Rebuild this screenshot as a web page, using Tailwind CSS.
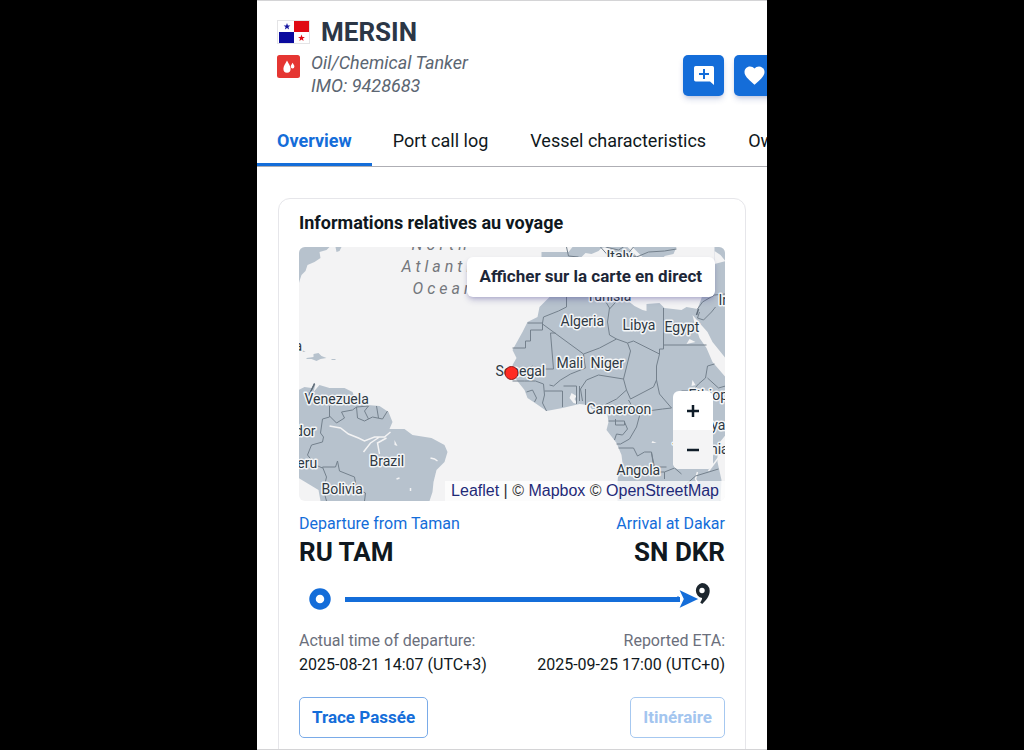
<!DOCTYPE html>
<html lang="fr">
<head>
<meta charset="utf-8">
<meta name="viewport" content="width=device-width, initial-scale=1">
<title>MERSIN</title>
<script src="https://cdn.jsdelivr.net/npm/@tailwindcss/browser@4"></script>
</head>
<body class="bg-black font-['Roboto',sans-serif] text-[#0f1820]">
<main class="mx-auto h-screen w-full max-w-[510px] overflow-hidden border-y border-[#d4d4d6] bg-white">
  <header class="-mr-2 flex items-start justify-between pt-[15px] pl-5">
    <div>
      <div class="flex items-center gap-[11px]">
        <svg class="h-6 w-[33px]" viewBox="0 0 33 24" role="img" aria-label="Panama">
          <rect x=".5" y=".5" width="32" height="23" fill="#fff" stroke="#e4e4e6"/>
          <rect x="17" y="1" width="15" height="11" fill="#e00a13"/>
          <rect x="2" y="12" width="15" height="11" fill="#0a0a9e"/>
          <path d="M10 3l.9 2.400h2.500l-2 1.600.7 2.400-2.100-1.400-2.100 1.400.7-2.400-2-1.600h2.500z" fill="#14149f"/>
          <path d="M24.500 14.500l.9 2.400h2.500l-2 1.600.7 2.400-2.100-1.400-2.100 1.400.7-2.400-2-1.600h2.500z" fill="#e00a13"/>
        </svg>
        <h1 class="text-[26px] leading-8 font-bold text-[#2b3646]">MERSIN</h1>
      </div>
      <div class="mt-[3px] flex items-start gap-[11px]">
        <svg class="mt-1 h-[23px] w-[23px]" viewBox="0 0 23 23" aria-hidden="true">
          <rect width="23" height="23" rx="2.500" fill="#e53632"/>
          <path d="M10 5.500c1.500 3.500 3.600 5.300 3.600 8.300a3.600 4 0 0 1-7.200 0c0-3 2.100-4.800 3.600-8.300zM15.600 7.800c.7 1.500 1.800 2.300 1.800 3.800a1.800 1.900 0 0 1-3.600 0c0-1.500 1.100-2.300 1.800-3.800z" fill="#fff"/>
        </svg>
        <p class="text-[18px] leading-[23px] text-[#5c6672] italic">Oil/Chemical Tanker<br>IMO: 9428683</p>
      </div>
    </div>
    <div class="mt-[39px] flex shrink-0 gap-[10px]">
      <button type="button" aria-label="Add note" class="flex h-[41px] w-[41px] items-center justify-center rounded-[5px] bg-[#146dd9] shadow-md shadow-blue-900/20">
        <svg class="h-6 w-6" viewBox="0 0 24 24" aria-hidden="true"><path d="M3.700 2h16.600A1.700 1.700 0 0 1 22 3.700V21l-4-3.500H3.700A1.700 1.700 0 0 1 2 15.800V3.700A1.700 1.700 0 0 1 3.700 2z" fill="#fff"/><path d="M12 5v10M7 10h10" stroke="#146dd9" stroke-width="2"/></svg>
      </button>
      <button type="button" aria-label="Favourite" class="flex h-[41px] w-[41px] items-center justify-center rounded-[5px] bg-[#146dd9] shadow-md shadow-blue-900/20">
        <svg class="h-6 w-6" viewBox="0 0 24 24" aria-hidden="true"><path d="M11.500 20.850l-1.450-1.320C4.900 14.860 1.500 11.780 1.500 8 1.500 4.920 3.920 2.500 7 2.500c1.740 0 3.410.81 4.500 2.090C12.590 3.310 14.260 2.500 16 2.500 19.080 2.500 21.500 4.920 21.500 8c0 3.780-3.400 6.860-8.550 11.540z" fill="#fff"/></svg>
      </button>
    </div>
  </header>

  <nav class="mt-[17px] flex overflow-hidden border-b border-[#aeaeb4] text-[18px] leading-6 whitespace-nowrap">
    <a href="#overview" aria-current="page" class="shrink-0 border-b-3 border-[#146dd9] px-5 pt-[15px] pb-[10px] font-bold text-[#146dd9]">Overview</a>
    <a href="#ports" class="shrink-0 px-[21px] pt-[15px]">Port call log</a>
    <a href="#vessel" class="shrink-0 px-[21px] pt-[15px]">Vessel characteristics</a>
    <a href="#ownership" class="shrink-0 px-[21px] pt-[15px]">Ownership</a>
  </nav>

  <section id="overview" class="mx-[21px] mt-[31px] rounded-xl border border-[#e6e6ea] px-5 pt-3 pb-10">
    <h2 class="text-[18px] leading-6 font-bold">Informations relatives au voyage</h2>

    <div class="relative mt-3 overflow-hidden rounded-md bg-[#f3f3f4]">
      <svg class="block h-[254px] w-full" viewBox="0 0 427 254" preserveAspectRatio="xMidYMid slice" role="img" aria-label="Carte du voyage">
        <g fill="#b7c2cd">
          <path d="M0 0H31L28 3 21 5 22 11 16 15 9 18 7 24 3 28 1 34 0 38zM37 0H43L41 4 38 5z"/>
          <path d="M0 143L6 140 13 141 17 137 15 145 21 138 31 141 46 141 54 145 56 150 68 153 69 158 81 159 90 165 94 175 91 182 106 182 114 188 133 191 146 198 149 205 146 215 138 223 135 235 134 245 131 254H22L20 243 0 231z"/>
          <path d="M0 103H4L7 105 0 105zM8 111L15 110 15 107 20 106 23 109 28 111 22 112 18 114 13 112 8 112zM33 112H37V113H33z"/>
          <path d="M243 5H270L274 0H378L375 7 366 9 361 20H427V111L414 95 409 85 401 76 394 68 396 76 401 91 408 101 414 115 427 130V188L419 198V215L423 233 422 254H319V235L320 225 324 216 323 208 318 196 308 183 310 175 309 168 298 166 289 158 281 157 264 161 248 164 238 157 229 151 226 143 218 133 214 118 218 111 214 103 224 85 229 75 239 70 241 60 251 50 243 30z"/>
          <path d="M416 0H427V30H416z"/>
        </g>
        <g fill="#f3f3f4">
          <path d="M283 10L287 6 293 7 300 4 303 1 308 0 318 10zM331 48V55L336 59 344 63 348 64 348 57 361 56 366 61 383 63 388 60 399 62 402 54 404 48zM334 0L344 10H339L329 0zM416 4L422 8 427 14 416 17z"/>
          <path d="M273 146L278 149 276 152 279 157 275 156 271 151zM394 133L397 138 393 139zM354 194L358 196 353 196zM391 92L397 95 388 97zM96 193L99 199 96 198z"/>
        </g>
        <g fill="none" stroke="#f3f3f4" stroke-width="1.500">
          <path d="M31 179L42 181 50 187 60 191 66 194 76 190 86 190 92 185M65 205L72 196 81 190M81 207L79 196 88 191M132 211L136 212 139 214M98 232L101 231M112 241V244M399 225L397 232 401 239M422 208L410 224"/>
        </g>
        <g fill="none" stroke="#74808c" stroke-width="1">
          <path d="M16 136L11 147 8 156M31 159V170L24 172 22 186 25 190 24 195 13 198 9 208 17 218 24 221M31 169L38 176 46 171 43 165 54 163 58 160 59 171 66 174 74 170 84 172 89 164M58 160L70 159 66 164 70 172M78 159L80 171M24 220L37 220 39 214 41 224 56 230 58 242 67 246 66 254M24 220L28 230 25 243 28 254"/>
          <path d="M214 101H227V94H232V83H244V76H229M244 76L245 70 260 64 268 60V50M244 77L285 107 301 101 318 92 311 88 309 75 311 61 308 56M257 86L252 86 255 122H236L234 119 226 123M285 107L286 115 287 121 272 127 262 133 255 139 251 138M311 62L321 51M318 92L329 96 335 94 361 107V102M365 61V98H408M361 102H365V98M329 96L332 104 328 120 325 132 328 143 318 152 306 158M361 107L358 119V133L355 140 332 152 328 143M358 133L361 147 373 161M330 153L334 160 342 165 364 162 373 161M214 134H226L237 134 245 137 246 148 244 156 248 164M228 145L234 143 238 151 236 155M246 144H264V160M265 139H278V157M281 139V154M284 154L282 142 288 133 300 128 325 132M287 158V142M310 174H326V178H317V172M326 175L329 182 324 188 318 187 316 193M342 165L338 180 331 192 322 197 318 197M320 201H335L339 209 346 205H353L355 219 356 225 366 225 376 221 383 227M383 144H394L400 137 407 131 409 119 416 117M409 131L420 141 427 139M353 206L356 220H368M366 225V232M388 237L397 229 420 222"/>
          <path d="M268 0L270 9 280 10M302 0L310 9M307 0L320 3 325 0M335 0L329 7 338 10 350 5 366 4 378 2M399 62L404 55 416 48 427 47M401 65L399 71 405 73 413 65 417 60"/>
        </g>
        <g fill="none" stroke="#5f6b78" stroke-width="1.500"><path d="M16 137L12 145 10 149M275 188M400 62L398 68"/></g>

        <g class="text-[16px] tracking-[4px] italic" fill="#74777c">
          <text x="113" y="3">North</text>
          <text x="103" y="25">Atlantic</text>
          <text x="114" y="47">Ocean</text>
        </g>
        <g class="text-[14px]" fill="#2f3943" stroke="#f3f5f7" stroke-width="3" stroke-linejoin="round" paint-order="stroke">
          <text x="-4" y="104">a</text>
          <text x="6" y="157">Venezuela</text>
          <text x="-34" y="189">Ecuador</text>
          <text x="-10" y="221">Peru</text>
          <text x="71" y="219">Brazil</text>
          <text x="23" y="247">Bolivia</text>
          <text x="308" y="14">Italy</text>
          <text x="288" y="54">Tunisia</text>
          <text x="262" y="79">Algeria</text>
          <text x="324" y="83">Libya</text>
          <text x="366" y="85">Egypt</text>
          <text x="420" y="58">Iraq</text>
          <text x="258" y="121">Mali</text>
          <text x="292" y="121">Niger</text>
          <text x="197" y="129">Senegal</text>
          <text x="288" y="167">Cameroon</text>
          <text x="318" y="228">Angola</text>
          <text x="390" y="153">Ethiopia</text>
          <text x="389" y="183">Kenya</text>
          <text x="374" y="207">Tanzania</text>
        </g>
        <circle cx="213" cy="126" r="6.500" fill="#ff2b22" stroke="#8c1b1b"/>
      </svg>
      <button type="button" class="absolute top-[10px] right-[10px] h-10 rounded-md bg-white px-[13px] text-[17px] font-bold whitespace-nowrap text-[#1d2738] shadow-md shadow-indigo-900/25">Afficher sur la carte en direct</button>
      <div class="absolute right-3 bottom-8 flex w-10 flex-col overflow-hidden rounded-md bg-white">
        <button type="button" aria-label="Zoom in" class="flex h-[39px] items-center justify-center"><svg class="h-3 w-3" viewBox="0 0 12 12" aria-hidden="true"><path d="M6 0v12M0 6h12" stroke="#0f1c28" stroke-width="2.500"/></svg></button>
        <button type="button" aria-label="Zoom out" class="flex h-[39px] items-center justify-center bg-[#f4f4f5]"><svg class="h-3 w-3" viewBox="0 0 12 12" aria-hidden="true"><path d="M0 6h12" stroke="#0f1c28" stroke-width="2.500"/></svg></button>
      </div>
      <div class="absolute right-0 bottom-0 bg-white/75 px-[6px] font-['Liberation_Sans',sans-serif] text-[16px] leading-5 whitespace-nowrap text-[#333]"><a href="#leaflet" class="text-[#1f2a78]">Leaflet</a> | © <a href="#mapbox" class="text-[#1f2a78]">Mapbox</a> © <a href="#osm" class="text-[#1f2a78]">OpenStreetMap</a></div>
    </div>

    <div class="mt-3 flex justify-between">
      <div>
        <p class="text-[16px] leading-[22px] text-[#146dd9]">Departure from Taman</p>
        <p class="text-[26px] leading-[34px] font-bold">RU TAM</p>
      </div>
      <div class="text-right">
        <p class="text-[16px] leading-[22px] text-[#146dd9]">Arrival at Dakar</p>
        <p class="text-[26px] leading-[34px] font-bold">SN DKR</p>
      </div>
    </div>

    <div class="mt-[14px] flex h-8 items-center pr-[14px] pl-[10px]" aria-hidden="true">
      <svg class="h-[22px] w-[22px] shrink-0" viewBox="0 0 22 22"><circle cx="11" cy="11" r="7.500" fill="#fff" stroke="#146dd9" stroke-width="6.500"/></svg>
      <div class="ml-[14px] h-[5px] flex-1 bg-[#146dd9]"></div>
      <svg class="h-8 w-[31px] shrink-0 overflow-visible" viewBox="0 0 31 32"><path d="M22 0a7.700 7.700 0 0 1 7.700 7.700c0 5.300-3.500 9.500-7.500 13.300l-2-1.600c1.200-1.500 1.900-2.900 1.900-4.300A7.700 7.700 0 0 1 22 0z" fill="#1c262e"/><circle cx="22" cy="7.500" r="2.700" fill="#fff"/><path d="M-2 5.500L20 16-2 26.500 3 16z" fill="#146dd9" stroke="#fff" stroke-width="1.500"/><path d="M-3 13.500H-1V18.500H-3z" fill="#146dd9"/></svg>
    </div>

    <div class="mt-[14px] flex justify-between text-[16px] leading-6">
      <div>
        <p class="text-[#6b6f7c]">Actual time of departure:</p>
        <p>2025-08-21 14:07 (UTC+3)</p>
      </div>
      <div class="text-right">
        <p class="text-[#6b6f7c]">Reported ETA:</p>
        <p>2025-09-25 17:00 (UTC+0)</p>
      </div>
    </div>

    <div class="mt-5 flex justify-between text-[17px] font-bold text-[#146dd9]">
      <button type="button" class="h-[41px] rounded-[5px] border border-[#7aabe8] px-3">Trace Passée</button>
      <button type="button" disabled class="h-[41px] rounded-[5px] border border-[#a6c8f0] px-3 text-[#a3c5ef]">Itinéraire</button>
    </div>
  </section>
</main>
</body>
</html>
